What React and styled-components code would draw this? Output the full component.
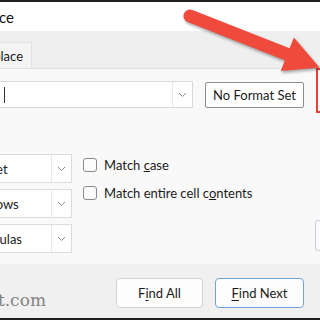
import React from 'react';
import styled, { createGlobalStyle } from 'styled-components';

const GlobalStyle = createGlobalStyle`
  html, body {
    margin: 0;
    padding: 0;
    background: #fff;
  }
  body {
    font-family: "Segoe UI", Lato, "Noto Sans", sans-serif;
  }
`;

const Window = styled.div`
  position: relative;
  width: 320px;
  height: 320px;
  box-sizing: border-box;
  overflow: hidden;
  display: flex;
  flex-direction: column;
  border-top: 2px solid #1f1f1f;
  border-bottom: 2px solid #1f1f1f;
  background: #f0f0f0;
  color: #1b1b1b;
  font-size: 13px;
`;

// text whose start lies left of the visible window edge
const Clipped = styled.div`
  display: flex;
  justify-content: flex-end;
  overflow: hidden;
  white-space: nowrap;
  width: ${p => p.$w}px;
  flex: none;
`;

const TitleBar = styled.div`
  height: 29px;
  background: #fff;
  display: flex;
  align-items: center;
  font-size: 15px;
  color: #111;
`;

const TabStrip = styled.div`
  height: 37px;
  display: flex;
  align-items: flex-end;
  background: #efefef;
`;

const Tab = styled.div`
  height: 26px;
  box-sizing: border-box;
  margin-left: -1px;
  padding-right: 8px;
  display: flex;
  align-items: center;
  background: #f4f4f4;
  border: 1px solid #e3e3e3;
  border-bottom: none;
`;

const Panel = styled.div`
  height: 196px;
  box-sizing: border-box;
  padding-top: 12px;
  display: flex;
  flex-direction: column;
  background: #f9f9f9;
  border-top: 1px solid #e0e0e0;
`;

const FindRow = styled.div`
  height: 27px;
  display: flex;
  align-items: center;
  gap: 12px;
`;

const Combo = styled.div`
  width: 195px;
  height: 27px;
  margin-left: -2px;
  box-sizing: border-box;
  display: flex;
  background: #fff;
  border: 1px solid #d9d9d9;
  flex: none;
`;

const Field = styled.div`
  flex: 1;
  display: flex;
  align-items: center;
  padding-left: 5px;
`;

const Caret = styled.span`
  width: 1px;
  height: 16px;
  background: #333;
`;

const DropButton = styled.div`
  width: 19px;
  display: flex;
  align-items: center;
  justify-content: center;
  border-left: 1px solid #e8e8e8;
`;

const FormatButton = styled.div`
  width: 99px;
  height: 26px;
  box-sizing: border-box;
  display: flex;
  align-items: center;
  justify-content: center;
  flex: none;
  background: #fff;
  border: 1px solid #8e8e8e;
  border-radius: 2px;
`;

const Highlight = styled.div`
  align-self: flex-start;
  margin-top: -13px;
  width: 60px;
  height: 45px;
  box-sizing: border-box;
  flex: none;
  border: 2px solid #e5413a;
`;

const OptionsRow = styled.div`
  margin-top: 46px;
  display: flex;
  align-items: flex-start;
`;

const SelectColumn = styled.div`
  display: flex;
  flex-direction: column;
  gap: 6px;
  flex: none;
`;

const Select = styled.div`
  width: 112px;
  height: 29px;
  margin-left: -40px;
  box-sizing: border-box;
  display: flex;
  background: #fff;
  border: 1px solid #dcdcdc;
`;

const SelectValue = styled.div`
  flex: 1;
  display: flex;
  align-items: center;
  padding-left: ${p => p.$pad}px;
  overflow: hidden;
  white-space: nowrap;
`;

const CheckColumn = styled.div`
  margin-left: 11px;
  padding-top: 4px;
  display: flex;
  flex-direction: column;
  gap: 14px;
`;

const CheckRow = styled.label`
  height: 14px;
  display: flex;
  align-items: center;
  gap: 7px;
  white-space: nowrap;
`;

const Box = styled.span`
  width: 14px;
  height: 14px;
  box-sizing: border-box;
  border: 1px solid #8a8a8a;
  border-radius: 3px;
  background: #fbfbfb;
  flex: none;
`;

const OptionsButton = styled.div`
  margin-left: auto;
  margin-right: -55px;
  margin-bottom: 2px;
  align-self: flex-end;
  width: 60px;
  height: 31px;
  box-sizing: border-box;
  background: #fdfdfd;
  border: 1px solid #c3cddb;
  border-radius: 3px;
`;

const Footer = styled.div`
  flex: 1;
  display: flex;
  align-items: flex-start;
  padding-top: 14px;
`;

const Watermark = styled(Clipped)`
  margin-top: 12px;
  font-family: "DejaVu Serif", "Liberation Serif", serif;
  font-size: 17px;
  color: #838383;
`;

const Button = styled.div`
  width: ${p => p.$w}px;
  height: 30px;
  margin-left: ${p => p.$ml}px;
  box-sizing: border-box;
  display: flex;
  align-items: center;
  justify-content: center;
  flex: none;
  background: #fdfdfd;
  border: 1px solid ${p => (p.$primary ? '#6ea2dc' : '#d3d3d3')};
  border-radius: 4px;
  u {
    text-decoration-thickness: 1px;
    text-underline-offset: 2px;
  }
`;

const Arrow = styled.svg`
  position: absolute;
  left: 0;
  top: -2px;
  pointer-events: none;
  filter: drop-shadow(1px 2px 1.5px rgba(0, 0, 0, 0.35));
`;

const Chevron = () => (
  <svg width="9" height="6" viewBox="0 0 9 6">
    <polyline points="1,1 4.5,4.5 8,1" fill="none" stroke="#8c8c8c" strokeWidth="1" />
  </svg>
);

const selects = [
  { label: 'Sheet', pad: 14 },
  { label: 'By Rows', pad: 9 },
  { label: 'Formulas', pad: 9 },
];

export default function App() {
  return (
    <>
      <GlobalStyle />
      <Window>
        <TitleBar>
          <Clipped $w={14}><span>Find and Replace</span></Clipped>
        </TitleBar>

        <TabStrip>
          <Tab>
            <Clipped $w={23}><span>Replace</span></Clipped>
          </Tab>
        </TabStrip>

        <Panel>
          <FindRow>
            <Combo>
              <Field><Caret /></Field>
              <DropButton><Chevron /></DropButton>
            </Combo>
            <FormatButton>No Format Set</FormatButton>
            <Highlight />
          </FindRow>

          <OptionsRow>
            <SelectColumn>
              {selects.map(s => (
                <Select key={s.label}>
                  <SelectValue $pad={s.pad}>{s.label}</SelectValue>
                  <DropButton><Chevron /></DropButton>
                </Select>
              ))}
            </SelectColumn>
            <CheckColumn>
              <CheckRow><Box /><span>Match <u>c</u>ase</span></CheckRow>
              <CheckRow><Box /><span>Match entire cell c<u>o</u>ntents</span></CheckRow>
            </CheckColumn>
            <OptionsButton />
          </OptionsRow>
        </Panel>

        <Footer>
          <Watermark $w={46}><span>groovypost.com</span></Watermark>
          <Button $w={87} $ml={70}>F<u>i</u>nd All</Button>
          <Button $w={89} $ml={12} $primary><u>F</u>ind Next</Button>
        </Footer>

        <Arrow width="320" height="320" viewBox="0 0 320 320">
          <line x1="190" y1="16" x2="289" y2="55" stroke="#ef4a3b" strokeWidth="13" strokeLinecap="round" />
          <polygon points="293.9,37.6 319.5,67.5 280.7,71" fill="#ef4a3b" />
        </Arrow>
      </Window>
    </>
  );
}
